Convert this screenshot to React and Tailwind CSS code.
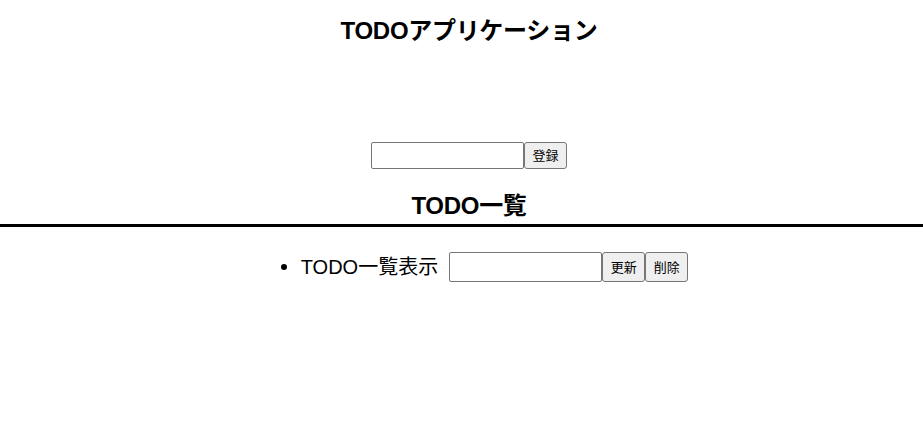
import React, {useState} from 'react';

const font = {fontFamily: '"Liberation Sans", "Noto Sans CJK JP", sans-serif'};

const inputCls = 'w-[153px] border border-[#767676] rounded-[2px] bg-white px-[2px] text-[13px] outline-none';
const buttonCls = 'border border-[#767676] rounded-[3px] bg-[#efefef] px-[7.5px] text-[13px] text-black leading-none';

export default function App() {
    const [text, setText] = useState('');
    const [todos] = useState([{id: 1, title: 'TODO一覧表示'}]);

    return (
        <div className="min-h-[435px] bg-white text-black" style={font}>
            <div className="pl-[15px]">
                <div className="pt-[17px] h-[45px] text-center text-[24px] leading-[28px] font-bold tracking-[-0.3px]">
                    TODOアプリケーション
                </div>

                <div className="mt-[97px] flex justify-center">
                    <input
                        className={`${inputCls} h-[27px]`}
                        value={text}
                        onChange={(e) => setText(e.target.value)}
                    />
                    <button className={`${buttonCls} h-[27px]`}>登録</button>
                </div>

                <div className="mt-[23px] h-[29px] text-center text-[24px] leading-[28px] font-bold tracking-[-0.3px]">
                    TODO一覧
                </div>
            </div>
            <div className="mt-[3px] h-[3px] bg-black" />

            <ul className="mt-[25px]">
                {todos.map((todo) => (
                    <li key={todo.id} className="flex items-center justify-center pl-[46px] h-[30px]">
                        <span className="w-[6px] h-[6px] rounded-full bg-black mr-[14px]" />
                        <span className="text-[20px] leading-[30px] mr-[11px]">{todo.title}</span>
                        <input className={`${inputCls} h-[30px]`} defaultValue="" />
                        <button className={`${buttonCls} h-[30px]`}>更新</button>
                        <button className={`${buttonCls} h-[30px]`}>削除</button>
                    </li>
                ))}
            </ul>
        </div>
    );
}
